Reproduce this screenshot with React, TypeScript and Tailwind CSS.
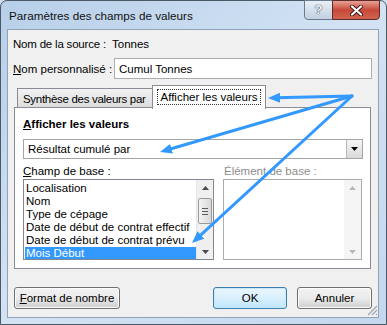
const items = [
  "Localisation",
  "Nom",
  "Type de cépage",
  "Date de début de contrat effectif",
  "Date de début de contrat prévu",
  "Mois Début",
];

function ScrollArrow({ up, muted }: { up?: boolean; muted?: boolean }) {
  return (
    <div className="h-[15px] flex items-center justify-center">
      <svg width="7" height="4" viewBox="0 0 7 4">
        <path d={up ? "M0 4 L3.5 0 L7 4 Z" : "M0 0 L3.5 4 L7 0 Z"} fill={muted ? "#b8b8b8" : "#4a4a4a"} />
      </svg>
    </div>
  );
}

function Button({ children, primary, w }: { children: React.ReactNode; primary?: boolean; w: string }) {
  return (
    <div
      className={`${w} h-[22px] rounded-[3px] border flex items-center justify-center bg-gradient-to-b ${
        primary
          ? "border-[#3c7fb1] from-[#eaf6fd] via-[#d9f0fc] to-[#bee6fd] shadow-[inset_0_0_0_1px_#c8e8f8]"
          : "border-[#707070] from-[#f2f2f2] via-[#ebebeb] to-[#cfcfcf] shadow-[inset_0_0_0_1px_#fbfbfb]"
      }`}
    >
      {children}
    </div>
  );
}

export default function App() {
  return (
    <div className="relative w-[387px] h-[325px] overflow-hidden whitespace-nowrap bg-[#cfdff0] font-['Liberation_Sans',Arial,sans-serif] text-[11.5px] leading-[16px] text-black">
      {/* window frame */}
      <div className="w-full h-full flex flex-col rounded-t-[7px] border border-[#4b5866] bg-gradient-to-br from-[#b7cfe9] via-[#d3e3f4] to-[#c3d7ee]">
        {/* title bar */}
        <div className="relative h-[28px] shrink-0">
          <div className="absolute left-[8px] top-[6px] text-[11.7px] leading-[18px] text-[#111]">Paramètres des champs de valeurs</div>
          <div className="absolute left-[303px] top-[-1px] w-[29px] h-[20px] rounded-bl-[4px] border border-[#6a7b90] bg-gradient-to-b from-[#e9eff6] via-[#d4dfeb] to-[#c2d1e2] flex items-center justify-center">
            <span className="text-[13px] font-bold text-[#f4f7fa] [text-shadow:0_0_1px_#2b3a4c,0_0_1px_#2b3a4c]">?</span>
          </div>
          <div className="absolute left-[331px] top-[-1px] w-[48px] h-[20px] rounded-br-[4px] border border-[#5e2a2a] bg-gradient-to-b from-[#e5a195] via-[#c7473a] to-[#d0644f] flex items-center justify-center">
            <svg width="13" height="11" viewBox="0 0 13 11">
              <path d="M2 1.5 L11 9.5 M11 1.5 L2 9.5" stroke="#3b1612" strokeWidth="4" strokeLinecap="round" />
              <path d="M2 1.5 L11 9.5 M11 1.5 L2 9.5" stroke="#ffffff" strokeWidth="2.2" strokeLinecap="round" />
            </svg>
          </div>
        </div>

        {/* client area */}
        <div className="ml-[6px] mr-[7px] h-[289px] border border-[#8fa2b8] bg-[#f0f0f0] flex flex-col">
          <div className="mt-[6px] pl-[5px] flex">
            <span className="w-[98px] tracking-[-0.2px]">Nom de la source :</span>
            <span className="pl-[1px]">Tonnes</span>
          </div>

          <div className="mt-[6px] pl-[5px] flex items-center">
            <span className="w-[101px]">
              <span className="underline">N</span>om personnalisé :
            </span>
            <div className="w-[258px] h-[21px] border border-[#abadb3] bg-white pl-[4px] flex items-center">Cumul Tonnes</div>
          </div>

          {/* tabs */}
          <div className="relative mt-[6px] ml-[6px] w-[357px] h-[184px]">
            <div className="absolute left-[3px] top-[3px] w-[136px] h-[20px] border border-b-0 border-[#898c95] bg-gradient-to-b from-[#f2f2f2] to-[#dcdcdc] pl-[5px] flex items-center tracking-[-0.3px]">
              Synthèse des valeurs par
            </div>
            <div className="absolute left-[0px] top-[22px] w-[357px] h-[162px] border border-[#898c95] bg-white flex flex-col px-[8px]">
              <div className="mt-[8px] font-bold">
                <span className="underline">A</span>fficher les valeurs
              </div>
              <div className="mt-[7px] w-[340px] h-[20px] border border-[#a5a5a5] bg-white flex items-center">
                <span className="pl-[4px] flex-1">Résultat cumulé par</span>
                <div className="w-[16px] h-[18px] border-l border-[#b8b8b8] bg-gradient-to-b from-[#f5f5f5] to-[#dadada] flex items-center justify-center">
                  <svg width="7" height="4" viewBox="0 0 7 4">
                    <path d="M0 0 L3.5 4 L7 0 Z" fill="#000" />
                  </svg>
                </div>
              </div>
              <div className="mt-[4px] flex">
                <span className="w-[201px]">
                  <span className="underline">C</span>hamp de base :
                </span>
                <span className="text-[#8d8d8d]">Élément de base :</span>
              </div>
              <div className="mt-[0px] flex gap-[9px]">
                <div className="w-[192px] h-[81px] border border-[#828790] bg-white flex">
                  <div className="flex-1 pt-[2px] pl-[1px] leading-[13px] overflow-hidden">
                    {items.map((it, i) => (
                      <div
                        key={it}
                        className={`h-[13px] pl-[1px] ${i === items.length - 1 ? "bg-[#3399ff] text-white" : ""}`}
                      >
                        {it}
                      </div>
                    ))}
                  </div>
                  <div className="w-[17px] bg-[#f0f0f0] border-l border-[#e6e6e6] flex flex-col">
                    <ScrollArrow up />
                    <div className="mx-[1px] mt-[3px] h-[26px] rounded-[2px] border border-[#9a9a9a] bg-gradient-to-r from-[#f4f4f4] to-[#d8d8d8] flex items-center justify-center">
                      <svg width="6" height="7" viewBox="0 0 6 7">
                        <path d="M0 0.5 H6 M0 3.5 H6 M0 6.5 H6" stroke="#5a5a5a" strokeWidth="1" />
                      </svg>
                    </div>
                    <div className="flex-1" />
                    <ScrollArrow />
                  </div>
                </div>
                <div className="w-[139px] h-[81px] border border-[#a9acb3] bg-white flex">
                  <div className="flex-1" />
                  <div className="w-[17px] bg-[#f5f5f5] flex flex-col">
                    <ScrollArrow up muted />
                    <div className="flex-1" />
                    <ScrollArrow muted />
                  </div>
                </div>
              </div>
            </div>
            <div className="absolute left-[138px] top-[0px] w-[114px] h-[24px] border border-b-0 border-[#898c95] bg-white flex items-start justify-center pt-[3px]">
              <span className="px-[3px] border border-dotted border-[#333] leading-[14px]">Afficher les valeurs</span>
            </div>
          </div>

          {/* buttons */}
          <div className="mt-[18px] pl-[6px] pr-[6px] flex">
            <Button w="w-[106px]">
              <span>
                <span className="underline">F</span>ormat de nombre
              </span>
            </Button>
            <div className="flex-1" />
            <Button w="w-[74px]" primary>
              OK
            </Button>
            <div className="w-[10px]" />
            <Button w="w-[75px]">Annuler</Button>
          </div>
        </div>
      </div>

      {/* resize grip */}
      <svg className="absolute left-[366px] top-[304px]" width="12" height="12" viewBox="0 0 12 12">
        <path d="M11 2 L2 11 M11 6 L6 11 M11 10 L10 11" stroke="#9aa6b4" strokeWidth="1.2" />
      </svg>

      {/* annotation arrows */}
      <svg className="absolute left-0 top-0 pointer-events-none" width="387" height="325" viewBox="0 0 387 325">
        <defs>
          <marker id="ah" viewBox="0 0 12 10" refX="4" refY="5" markerWidth="12" markerHeight="10" markerUnits="userSpaceOnUse" orient="auto">
            <path d="M0 0 L12 5 L0 10 Z" fill="#3399ff" />
          </marker>
        </defs>
        <g stroke="#3399ff" strokeWidth="3" strokeLinecap="round" fill="none">
          <line x1="352" y1="96" x2="276" y2="97.8" markerEnd="url(#ah)" />
          <line x1="352" y1="96" x2="167.7" y2="149.8" markerEnd="url(#ah)" />
          <line x1="352" y1="96" x2="197.9" y2="237.6" markerEnd="url(#ah)" />
        </g>
      </svg>
    </div>
  );
}
